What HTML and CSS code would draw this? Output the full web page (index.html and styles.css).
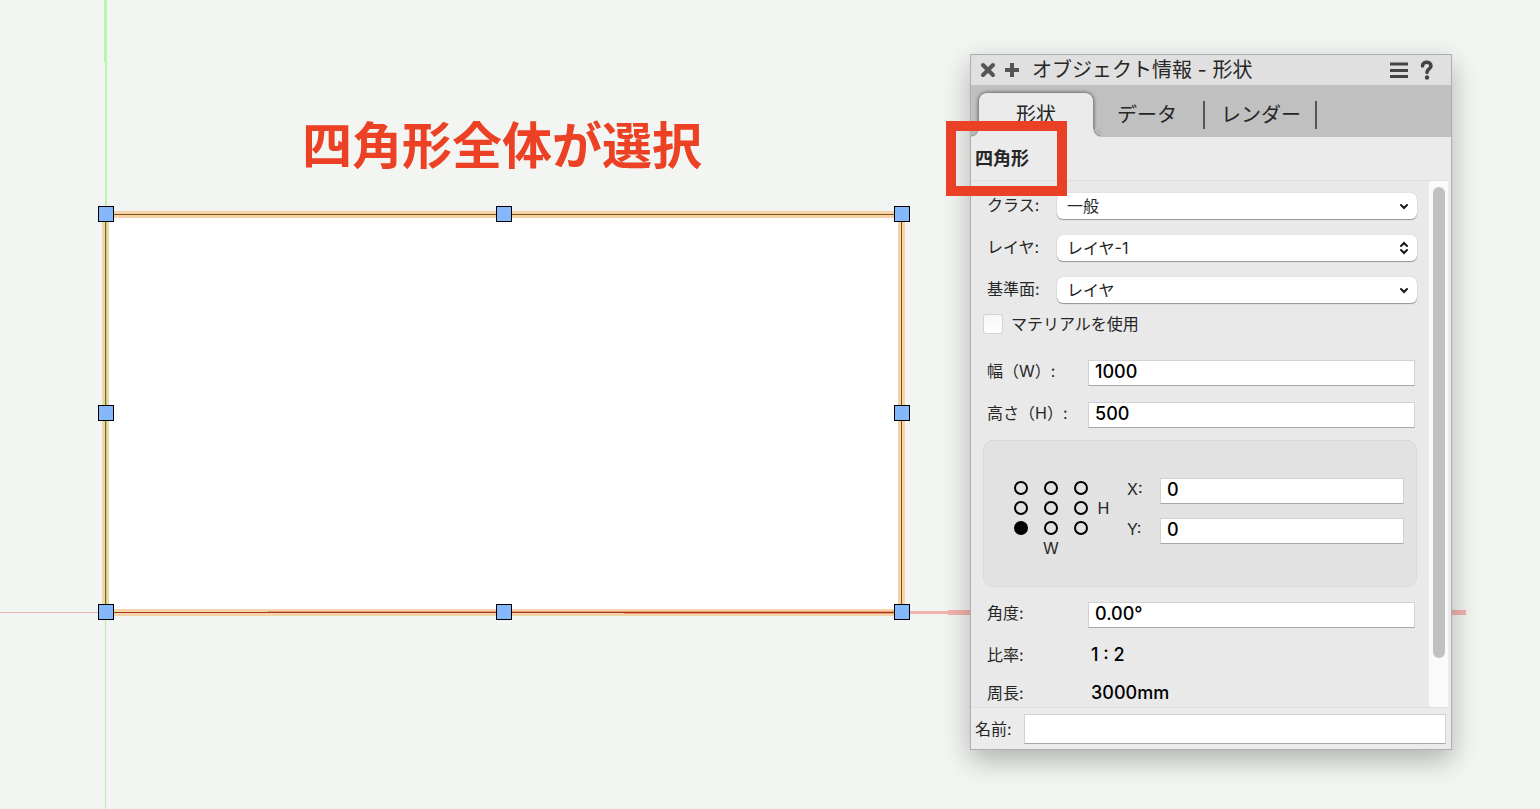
FILE: index.html
```html
<!DOCTYPE html>
<html lang="ja">
<head>
<meta charset="UTF-8">
<meta name="viewport" content="width=device-width, initial-scale=1.0">
<title>オブジェクト情報</title>
<link rel="stylesheet" href="styles.css">
</head>
<body>

<main class="canvas">
    <!-- Axes, selected rectangle and its handles -->
    <svg class="drawing" aria-hidden="true">
        <rect x="109" y="217" width="790" height="392" fill="#fff"/>
        <g fill="none" stroke="#f4d4a8" stroke-width="7">
            <rect x="105.5" y="214.5" width="796" height="398"/>
        </g>
        <g fill="#b9f5b0">
            <rect x="104" y="0" width="3" height="62"/>
            <rect x="105" y="62" width="2" height="152"/>
            <rect x="105" y="620" width="1" height="2000" fill="#b9f0b2"/>
        </g>
        <g fill="#f0b3ae">
            <rect x="0" y="612" width="98" height="1" fill="#e8b5b0"/>
            <rect x="910" y="611" width="38" height="3"/>
            <rect x="948" y="610" width="518" height="5"/>
        </g>
        <rect x="106" y="222" width="1" height="382" fill="#aed58b"/>
        <rect x="105" y="222" width="1" height="382" fill="#5c7414"/>
        <rect x="114" y="214" width="780" height="1" fill="#7c5118"/>
        <rect x="901" y="222" width="1" height="382" fill="#7c5118"/>
        <rect x="268" y="611" width="626" height="1" fill="#e59a78"/>
        <rect x="624" y="613" width="270" height="1" fill="#e59a78"/>
        <rect x="114" y="612" width="780" height="1" fill="#ad3815"/>
        <g fill="#85b7fb" stroke="#000">
            <rect x="98.500" y="206.500" width="15" height="15"/>
            <rect x="496.500" y="206.500" width="15" height="15"/>
            <rect x="894.500" y="206.500" width="15" height="15"/>
            <rect x="98.500" y="405.500" width="15" height="15"/>
            <rect x="894.500" y="405.500" width="15" height="15"/>
            <rect x="98.500" y="604.500" width="15" height="15"/>
            <rect x="496.500" y="604.500" width="15" height="15"/>
            <rect x="894.500" y="604.500" width="15" height="15"/>
        </g>
    </svg>

    <h1 class="note">四角形全体が選択</h1>

    <section class="palette">
        <header class="titlebar">
            <button type="button" class="icon-btn" aria-label="閉じる">
                <svg width="16" height="16" viewBox="0 0 16 16"><path d="M3 3l10 10M13 3L3 13" stroke="#555" stroke-width="4" stroke-linecap="round"/></svg>
            </button>
            <button type="button" class="icon-btn" aria-label="追加">
                <svg width="16" height="16" viewBox="0 0 16 16"><path d="M8 1v14M1 8h14" stroke="#555" stroke-width="4"/></svg>
            </button>
            <h2>オブジェクト情報 - 形状</h2>
            <button type="button" class="icon-btn" aria-label="メニュー">
                <svg width="18" height="16" viewBox="0 0 18 16"><path d="M0 2h18M0 8.500h18M0 14.500h18" stroke="#444" stroke-width="3"/></svg>
            </button>
            <button type="button" class="icon-btn help" aria-label="ヘルプ">
                <svg width="14" height="20" viewBox="0 0 14 20"><path d="M2.500 6C2.500 0.800 11 1 11 6C11 9 7 9 7 12.500" fill="none" stroke="#444" stroke-width="3.500" stroke-linecap="round"/><circle cx="7" cy="17.500" r="2.200" fill="#444"/></svg>
            </button>
        </header>

        <nav class="tabs">
            <button type="button" class="tab active">形状</button>
            <button type="button" class="tab">データ</button>
            <button type="button" class="tab">レンダー</button>
        </nav>

        <h3 class="object-type">四角形</h3>

        <div class="scroll-area">
            <form class="props">
                <div class="row select-row">
                    <label for="class-select">クラス:</label>
                    <div class="select-wrap">
                        <select id="class-select"><option>一般</option></select>
                        <svg class="arrow" width="8" height="16" viewBox="0 0 8 16"><path d="M1 7l3 3 3-3"/></svg>
                    </div>
                </div>
                <div class="row select-row">
                    <label for="layer-select">レイヤ:</label>
                    <div class="select-wrap">
                        <select id="layer-select"><option>レイヤ-1</option></select>
                        <svg class="arrow" width="8" height="16" viewBox="0 0 8 16"><path d="M1 6l3-3 3 3M1 10l3 3 3-3"/></svg>
                    </div>
                </div>
                <div class="row select-row">
                    <label for="plane-select">基準面:</label>
                    <div class="select-wrap">
                        <select id="plane-select"><option>レイヤ</option></select>
                        <svg class="arrow" width="8" height="16" viewBox="0 0 8 16"><path d="M1 7l3 3 3-3"/></svg>
                    </div>
                </div>

                <div class="check-row">
                    <input type="checkbox" id="material">
                    <label for="material">マテリアルを使用</label>
                </div>

                <div class="row">
                    <label for="width">幅（W）:</label>
                    <input type="text" id="width" value="1000">
                </div>
                <div class="row">
                    <label for="height">高さ（H）:</label>
                    <input type="text" id="height" value="500">
                </div>

                <!-- Anchor point and coordinates -->
                <div class="anchor-box">
                    <div class="anchor-grid">
                        <input type="radio" name="anchor" aria-label="左上">
                        <input type="radio" name="anchor" aria-label="上">
                        <input type="radio" name="anchor" aria-label="右上">
                        <span></span>
                        <input type="radio" name="anchor" aria-label="左">
                        <input type="radio" name="anchor" aria-label="中央">
                        <input type="radio" name="anchor" aria-label="右">
                        <span>H</span>
                        <input type="radio" name="anchor" aria-label="左下" checked>
                        <input type="radio" name="anchor" aria-label="下">
                        <input type="radio" name="anchor" aria-label="右下">
                        <span></span>
                        <span></span>
                        <span>W</span>
                    </div>
                    <div class="coords">
                        <div class="coord">
                            <label for="pos-x">X:</label>
                            <input type="text" id="pos-x" value="0">
                        </div>
                        <div class="coord">
                            <label for="pos-y">Y:</label>
                            <input type="text" id="pos-y" value="0">
                        </div>
                    </div>
                </div>

                <div class="row">
                    <label for="angle">角度:</label>
                    <input type="text" id="angle" value="0.00°">
                </div>
                <div class="row info">
                    <label for="ratio">比率:</label>
                    <output id="ratio">1 : 2</output>
                </div>
                <div class="row info">
                    <label for="perimeter">周長:</label>
                    <output id="perimeter">3000mm</output>
                </div>
            </form>
            <div class="scrollbar"><div class="thumb"></div></div>
        </div>

        <footer class="name-row">
            <label for="name">名前:</label>
            <input type="text" id="name">
        </footer>
    </section>

    <div class="highlight"></div>
</main>

</body>
</html>
```

FILE: styles.css
```css
* {
    box-sizing: border-box;
}
body {
    margin: 0;
    background: #f2f5f1;
    color: #262626;
    font-family: Inter, "Noto Sans CJK JP", sans-serif;
    font-size: 16px;
    line-height: 22px;
}
h1, h2, h3 {
    margin: 0;
}
button, input, select {
    font: inherit;
    color: inherit;
    margin: 0;
    padding: 0;
    border: 0;
}
button {
    background: none;
    cursor: pointer;
}
.canvas {
    position: relative;
    min-height: 100vh;
    overflow: hidden;
}
.drawing {
    position: absolute;
    inset: 0;
    width: 100%;
    height: 100%;
}
.note {
    position: absolute;
    left: 302px;
    top: 112px;
    color: #ec4124;
    font-family: "Noto Sans CJK JP", sans-serif;
    font-size: 50px;
    line-height: 60px;
    font-weight: 700;
    white-space: nowrap;
}
.highlight {
    position: absolute;
    left: 946px;
    top: 121px;
    width: 121px;
    height: 75px;
    border: 10px solid #ea4025;
    pointer-events: none;
}

/* floating palette */
.palette {
    position: absolute;
    left: 970px;
    top: 54px;
    width: 482px;
    height: 696px;
    display: flex;
    flex-direction: column;
    background: #ebebeb;
    border: 1px solid #acb0ac;
    box-shadow: 0 10px 26px rgba(0, 0, 0, 0.28);
}
.titlebar {
    display: flex;
    align-items: center;
    height: 30px;
    padding: 0 17px 0 9px;
    gap: 8px;
    background: #e0e0e0;
}
.titlebar h2 {
    flex: 1;
    padding-left: 4px;
    font-size: 20px;
    font-weight: 400;
    line-height: 30px;
}
.icon-btn {
    display: flex;
}
.help {
    margin-left: 4px;
}
.tabs {
    display: flex;
    height: 52px;
    padding: 8px 8px 0;
    background: #c0c0c0;
}
.tab {
    position: relative;
    padding: 0 16px;
    font-size: 20px;
    line-height: 44px;
}
.tab:not(.active)::after {
    content: "";
    position: absolute;
    right: 0;
    top: 8px;
    width: 2px;
    height: 28px;
    background: #555;
}
.tab:nth-child(2) {
    padding: 0 28px 0 24px;
}
.tab.active {
    width: 114px;
    background: #ebebeb;
    border-radius: 8px 8px 0 0;
    box-shadow: 0 0 4px rgba(0, 0, 0, 0.7);
    clip-path: inset(-8px -8px 0 -8px);
}
/* curved feet of the active tab */
.tab.active::before,
.tab.active::after {
    content: "";
    position: absolute;
    bottom: 0;
    width: 8px;
    height: 8px;
}
.tab.active::before {
    left: -8px;
    background: radial-gradient(circle at 0 0, #b8b8b8 6px, #999 7px, #ebebeb 8px);
}
.tab.active::after {
    right: -8px;
    background: radial-gradient(circle at 100% 0, #b8b8b8 6px, #999 7px, #ebebeb 8px);
}
.object-type {
    height: 43px;
    padding-left: 4px;
    font-size: 18px;
    line-height: 44px;
}
.scroll-area {
    display: flex;
    flex: 1;
    min-height: 0;
    margin: 0 3px 0 0;
    border-top: 1px solid #dfdfdf;
    border-bottom: 1px solid #e0e0e0;
    background: #e9e9e9;
    overflow: hidden;
}
.props {
    flex: 1;
    padding: 12px 12px 0 12px;
}
.row {
    display: grid;
    grid-template-columns: 101px 1fr;
    align-items: start;
    height: 26px;
    margin: 0 2px 16px 4px;
}
.select-row {
    grid-template-columns: 70px 1fr;
    margin-right: 0;
}
.select-row label {
    line-height: 24px;
}
.select-wrap {
    position: relative;
}
select {
    display: block;
    width: 100%;
    height: 26px;
    padding: 0 24px 0 10px;
    appearance: none;
    background: #fff;
    border-radius: 6px;
    box-shadow: 0 1px 1px rgba(0, 0, 0, 0.35), 0 0 1px rgba(0, 0, 0, 0.2);
}
.arrow {
    position: absolute;
    right: 9px;
    top: 5px;
    fill: none;
    stroke: #1c1c1c;
    stroke-width: 2;
    stroke-linecap: round;
    pointer-events: none;
}
.check-row {
    display: flex;
    align-items: center;
    gap: 8px;
    margin: -6px 0 25px;
}
input[type="checkbox"] {
    width: 20px;
    height: 20px;
    appearance: none;
    background: linear-gradient(#f6f6f6, #fff);
    border: 1px solid #d4d4d4;
    border-radius: 3px;
}
input[type="text"] {
    width: 100%;
    height: 26px;
    padding: 0 6px 4px;
    background: #fff;
    color: #000;
    font-size: 18px;
    font-weight: 500;
    border: 1px solid #d2d2d2;
    border-bottom-color: #a8a8a8;
}
.anchor-box {
    display: flex;
    gap: 16px;
    height: 147px;
    margin: -4px 0 15px;
    padding: 37px 12px 0 22px;
    background: #e2e2e2;
    border: 1px solid #d8d8d8;
    border-radius: 10px;
}
.anchor-grid {
    display: grid;
    grid-template-columns: 30px 30px 30px 15px;
    grid-auto-rows: 20px;
    align-content: start;
    place-items: center;
}
input[type="radio"] {
    width: 14px;
    height: 14px;
    appearance: none;
    border: 2px solid #000;
    border-radius: 50%;
}
input[type="radio"]:checked {
    background: #000;
}
.coords {
    display: flex;
    flex: 1;
    flex-direction: column;
    gap: 14px;
}
.coord {
    display: grid;
    grid-template-columns: 33px 1fr;
}
.row.info {
    margin-bottom: 12px;
}
output {
    padding-left: 3px;
    color: #000;
    font-size: 18px;
    font-weight: 500;
}
.scrollbar {
    width: 19px;
    padding: 6px 3px 0 4px;
    background: #fafafa;
}
.thumb {
    width: 12px;
    height: 471px;
    background: #c1c1c1;
    border-radius: 6px;
}
.name-row {
    display: flex;
    align-items: center;
    gap: 12px;
    height: 41px;
    padding: 0 5px 0 4px;
}
.name-row label {
    white-space: nowrap;
}
.name-row input[type="text"] {
    flex: 1;
    height: 30px;
}
```
